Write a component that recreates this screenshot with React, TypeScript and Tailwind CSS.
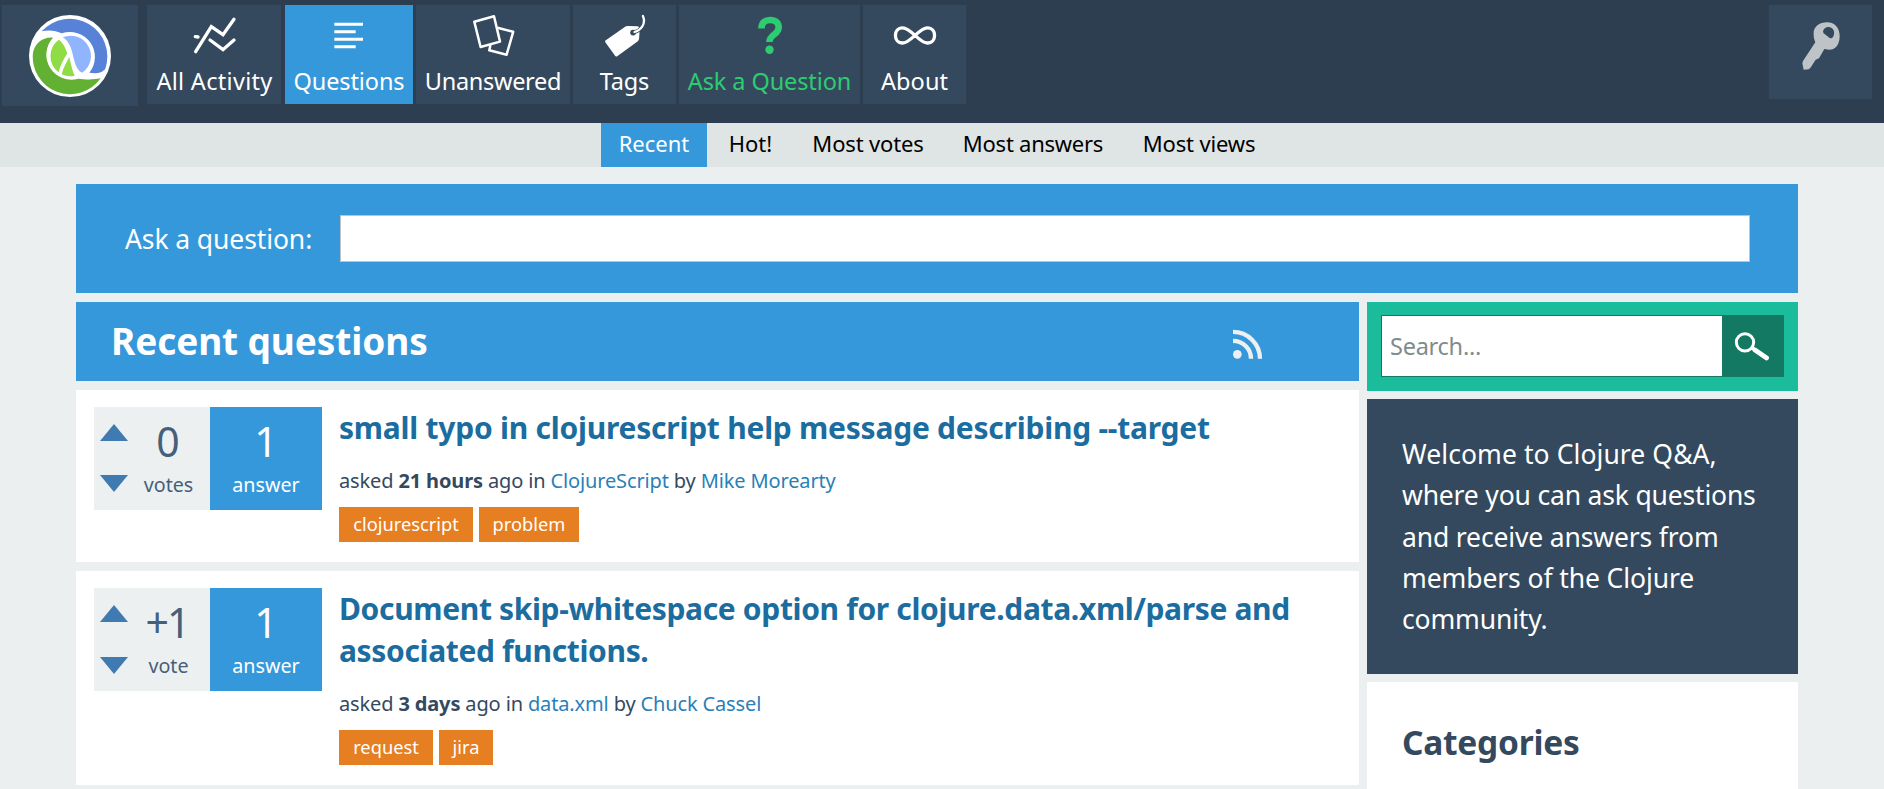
import type { ReactNode } from "react";

/* ---------- icons ---------- */

function Logo() {
  return (
    <svg className="size-[82px]" viewBox="27 21 246 246">
      <circle cx="150" cy="144" r="123" fill="#fff" />
      <path
        d="M65 70 A113 113 0 0 1 256 182 C246 196 226 197 208 194 A75 75 0 0 0 125 76 C108 67 85 65 65 70Z"
        fill="#5881d8"
      />
      <path
        d="M99 89 C68 86 45 106 39 134 A112 112 0 0 0 242 211 C218 216 192 214 175 212 A75 75 0 0 1 99 89Z"
        fill="#63b132"
      />
      <path d="M116 95 C130 105 137 120 142 136 C130 155 120 174 116 193 A61 61 0 0 1 116 95Z" fill="#90dc47" />
      <path d="M148 147 C154 175 158 190 164 203 A61 61 0 0 1 125 199 C129 180 139 165 148 147Z" fill="#90dc47" />
      <path
        d="M128 88 A61 61 0 0 1 187 194 C169 188 163 160 157 134 C152 114 144 98 128 88Z"
        fill="#91b4ff"
      />
    </svg>
  );
}

const ActivityIcon = () => (
  <svg className="size-12" viewBox="570 36 144 144" fill="none" stroke="#fff" strokeWidth="10" strokeLinecap="round">
    <path d="M587 155 L634 80 L669 104 L702 58" />
    <path d="M630 120 L669 149 L702 120" />
    <path d="M586 110 L594 111" />
  </svg>
);

const QuestionsIcon = () => (
  <svg className="size-12" viewBox="975 36 144 144" fill="none" stroke="#fff" strokeWidth="9">
    <path d="M1003 73 H1089 M1003 95 H1067 M1003 118 H1089 M1003 140 H1067" />
  </svg>
);

const CardsIcon = () => (
  <svg className="size-12" viewBox="469 12 48 48" fill="none" stroke="#fff" strokeWidth="2.5" strokeLinejoin="round">
    <path d="M474.3 21.7 L494 16.3 L500 41.6 L480.6 47 Z" />
    <path d="M497.5 27.8 L513.2 31.8 L506.6 54.7 L489.3 50.3 L490.4 45" />
  </svg>
);

const TagIcon = () => (
  <svg className="size-12" viewBox="600.5 12 48 48" fill="none">
    <path
      d="M604.6 40.8 L625 26.4 Q626 25.9 627 26 L637 26.3 Q639.3 26.6 639.2 29 L638.6 38.5 Q638.4 40.4 637 41.6 L617 56 Q615.4 57.2 614.4 55.6 L604.8 42.2 Z"
      fill="#fff"
    />
    <circle cx="632.6" cy="32.6" r="2.9" fill="#34495e" />
    <path d="M634 32 C640 30.5 646 24 642.4 16" stroke="#34495e" strokeWidth="3.6" />
    <path d="M634 32 C640 30.5 646 24 642.4 16" stroke="#fff" strokeWidth="2.3" strokeLinecap="round" />
  </svg>
);

const HelpIcon = () => (
  <svg className="size-12" viewBox="745.5 12 48 48" fill="none">
    <path
      d="M761 28.4 C761 22.6 764.6 20 769.6 20 C775 20 778.2 23 778.2 27.4 C778.2 34.5 768.9 34.5 768.9 42"
      stroke="#2ecc71"
      strokeWidth="6.6"
    />
    <circle cx="769" cy="49.8" r="4.2" fill="#2ecc71" />
  </svg>
);

const InfinityIcon = () => (
  <svg className="size-12" viewBox="890.8 12 48 48" fill="none" stroke="#fff" strokeWidth="3.3">
    <path d="M914.8 35.4 C909 30 906 27.8 902.5 27.8 C892.8 27.8 892.8 43 902.5 43 C906 43 909 40.8 914.8 35.4 C920.6 30 923.6 27.8 927.1 27.8 C936.8 27.8 936.8 43 927.1 43 C923.6 43 920.6 40.8 914.8 35.4Z" />
  </svg>
);

const KeyIcon = () => (
  <svg className="h-[48px] w-[38px]" viewBox="1322 64 114 144">
    <path
      fillRule="evenodd"
      fill="#bdc3c7"
      d="M1357 102 C1355 80 1372 65 1397 65 C1422 65 1436 85 1435 108 C1434 133 1422 147 1403 147 L1389 145 L1373 173 L1363 177 L1347 202 L1342 206 L1327 207 L1323 188 L1325 181 L1362 125 C1359 118 1357 110 1357 102Z M1385 93 C1386 83 1395 78 1403 79 C1415 81 1420 90 1418 100 C1416 112 1410 116 1404 111 L1387 98Z"
    />
  </svg>
);

const RssIcon = () => (
  <svg className="size-8" viewBox="50 40 96 96" fill="none" stroke="#ecf0f1" strokeWidth="13">
    <circle cx="66" cy="119" r="13" fill="#ecf0f1" stroke="none" />
    <path d="M53 78.5 A54 54 0 0 1 107 132 M53 51.5 A81 81 0 0 1 134 132" />
  </svg>
);

const SearchIcon = () => (
  <svg className="h-[30px] w-[36px]" viewBox="1119 992 108 90" fill="none" stroke="#fff">
    <circle cx="1152" cy="1026" r="26" strokeWidth="9" />
    <path d="M1173 1043 L1181 1048" strokeWidth="11" />
    <path d="M1182 1049 L1217 1073" strokeWidth="14" strokeLinecap="round" />
  </svg>
);

/* ---------- header ---------- */

type NavEntry = { label: string; icon: ReactNode; box: string; text: string };

const nav: NavEntry[] = [
  { label: "All Activity", icon: <ActivityIcon />, box: "w-[134px] bg-[#34495e] mr-1", text: "pl-px text-white tracking-[0.3px]" },
  { label: "Questions", icon: <QuestionsIcon />, box: "w-[128px] bg-[#3498db] mr-[3px]", text: "text-white tracking-[-0.1px]" },
  { label: "Unanswered", icon: <CardsIcon />, box: "w-[154px] bg-[#34495e] mr-[3px]", text: "text-white tracking-[-0.3px]" },
  { label: "Tags", icon: <TagIcon />, box: "w-[103px] bg-[#34495e] mr-[3px]", text: "text-white tracking-[-0.2px]" },
  { label: "Ask a Question", icon: <HelpIcon />, box: "w-[181px] bg-[#34495e] mr-[3px]", text: "text-[#2ecc71] tracking-[-0.1px]" },
  { label: "About", icon: <InfinityIcon />, box: "w-[103px] bg-[#34495e]", text: "text-white tracking-[0.1px]" },
];

function Header() {
  return (
    <header className="flex h-[123px] items-start bg-[#2c3e50] pt-[5px] pr-3 pl-0.5">
      <a className="mr-[9px] flex h-[101px] w-[136px] items-start justify-center bg-[#34495e] pt-[10px]">
        <Logo />
      </a>
      <nav className="flex">
        {nav.map((n) => (
          <a key={n.label} className={`flex h-[99px] flex-col items-center pt-[7px] ${n.box}`}>
            {n.icon}
            <span className={`mt-[5px] text-[23.5px] leading-8 whitespace-nowrap ${n.text}`}>{n.label}</span>
          </a>
        ))}
      </nav>
      <button className="ml-auto flex h-[94px] w-[103px] justify-center bg-[#34495e] pt-[17px]">
        <KeyIcon />
      </button>
    </header>
  );
}

const tabs = [
  { label: "Recent", cls: "w-[106px] bg-[#3498db] text-white" },
  { label: "Hot!", cls: "w-[79px]" },
  { label: "Most votes", cls: "w-[148px] tracking-[-0.15px]" },
  { label: "Most answers", cls: "w-[174px] tracking-[-0.25px]" },
  { label: "Most views", cls: "w-[150px] tracking-[-0.15px]" },
];

function SubNav() {
  return (
    <div className="flex h-11 gap-1 bg-[#dfe4e4] pl-[601px] text-[22px] leading-[40px] text-black">
      {tabs.map((t) => (
        <a key={t.label} className={`text-center whitespace-nowrap ${t.cls}`}>
          {t.label}
        </a>
      ))}
    </div>
  );
}

/* ---------- questions ---------- */

type Question = {
  votes: string;
  votesCls: string;
  unit: string;
  title: string[];
  titleTracking: string;
  when: string;
  category: string;
  author: string;
  tags: { label: string; w: string }[];
  height: string;
  arrowGap: string;
};

const questions: Question[] = [
  {
    votes: "0",
    votesCls: "pr-[5px]",
    unit: "votes",
    title: ["small typo in clojurescript help message describing --target"],
    titleTracking: "tracking-[-0.24px]",
    when: "21 hours",
    category: "ClojureScript",
    author: "Mike Morearty",
    tags: [
      { label: "clojurescript", w: "w-[134px]" },
      { label: "problem", w: "w-[100px]" },
    ],
    height: "h-[172px]",
    arrowGap: "mt-[34px]",
  },
  {
    votes: "+1",
    votesCls: "pr-[7px] tracking-[-2px]",
    unit: "vote",
    title: ["Document skip-whitespace option for clojure.data.xml/parse and", "associated functions."],
    titleTracking: "tracking-[-0.35px]",
    when: "3 days",
    category: "data.xml",
    author: "Chuck Cassel",
    tags: [
      { label: "request", w: "w-[94px]" },
      { label: "jira", w: "w-[54px]" },
    ],
    height: "h-[214px]",
    arrowGap: "mt-[35px]",
  },
];

function QuestionCard({ q }: { q: Question }) {
  return (
    <article className={`flex bg-white pt-[17px] pl-[18px] ${q.height}`}>
      <div className="flex h-[103px] w-[116px] shrink-0 bg-[#ecf0f1] text-[#465f7b]">
        <div className="flex w-[37px] flex-col items-start pt-[17px] pl-1.5">
          <svg className="h-[17px] w-[28px]" viewBox="0 0 28 17">
            <path d="M14 0 L28 17 H0Z" fill="#3f7ab0" />
          </svg>
          <svg className={`h-[17px] w-[28px] ${q.arrowGap}`} viewBox="0 0 28 17">
            <path d="M0 0 H28 L14 17Z" fill="#3f7ab0" />
          </svg>
        </div>
        <div className="w-[79px] text-center">
          <div className={`mt-[10px] h-[49px] text-[41px] leading-[49px] ${q.votesCls}`}>{q.votes}</div>
          <div className="mt-[6px] pr-1 text-[19.7px] leading-[26px]">{q.unit}</div>
        </div>
      </div>
      <div className="h-[103px] w-[112px] shrink-0 bg-[#3498db] text-center text-white">
        <div className="mt-[10px] h-[49px] text-[41px] leading-[49px]">1</div>
        <div className="mt-[6px] text-[19.7px] leading-[26px]">answer</div>
      </div>
      <div className="ml-[17px]">
        <h3 className={`text-[30px] leading-[42px] font-bold whitespace-nowrap text-[#1b6c9f] ${q.titleTracking}`}>
          {q.title.map((line) => (
            <span key={line} className="block">
              {line}
            </span>
          ))}
        </h3>
        <p className="mt-[17px] text-[20px] leading-[30px] tracking-[-0.14px] whitespace-nowrap text-[#34495e]">
          asked <b>{q.when}</b> ago in <a className="text-[#2980b9]">{q.category}</a> by{" "}
          <a className="text-[#2980b9]">{q.author}</a>
        </p>
        <div className="mt-[11px] flex gap-1.5 text-[18.3px] leading-[34px] text-white">
          {q.tags.map((t) => (
            <a key={t.label} className={`h-[35px] bg-[#e67e22] text-center ${t.w}`}>
              {t.label}
            </a>
          ))}
        </div>
      </div>
    </article>
  );
}

/* ---------- page ---------- */

const welcome = [
  { text: "Welcome to Clojure Q&A,", cls: "tracking-[0.08px]" },
  { text: "where you can ask questions", cls: "tracking-[-0.18px]" },
  { text: "and receive answers from", cls: "tracking-[-0.15px]" },
  { text: "members of the Clojure", cls: "tracking-[-0.1px]" },
  { text: "community.", cls: "tracking-[-0.15px]" },
];

export default function App() {
  return (
    <div className="h-[789px] w-[1884px] overflow-hidden bg-[#ebeff0] font-['Noto_Sans',sans-serif]">
      <Header />
      <SubNav />
      <main className="mt-[17px] ml-[76px] w-[1722px]">
        <section className="flex h-[109px] items-center bg-[#3498db] pr-12 pl-[49px]">
          <label className="w-[215px] text-[26.5px] leading-9 tracking-[-0.1px] whitespace-nowrap text-white">
            Ask a question:
          </label>
          <input className="h-[47px] flex-1 border border-[#bdc3c7] bg-white" />
        </section>
        <div className="mt-[9px] flex gap-2">
          <div className="flex w-[1283px] flex-col gap-[9px]">
            <div className="flex h-[79px] items-start justify-between bg-[#3498db] pr-[95px] pl-[35px]">
              <h1 className="mt-[14px] text-[37px] leading-[50px] font-bold tracking-[-0.1px] text-white">
                Recent questions
              </h1>
              <div className="mt-[26px]">
                <RssIcon />
              </div>
            </div>
            {questions.map((q) => (
              <QuestionCard key={q.unit} q={q} />
            ))}
            <div className="h-[60px] bg-white" />
          </div>
          <aside className="flex w-[431px] flex-col gap-2">
            <div className="flex h-[89px] bg-[#1abc9c] px-[14px] pt-[13px]">
              <input
                placeholder="Search..."
                className="h-[62px] w-[341px] border border-r-0 border-[#147963] bg-white pl-2 text-[23.5px] tracking-[-0.25px] placeholder:text-[#7f8c8d]"
              />
              <button className="flex h-[62px] w-[62px] items-start bg-[#147963] pt-[16px] pl-[12px]">
                <SearchIcon />
              </button>
            </div>
            <div className="h-[275px] bg-[#34495e] pt-[35px] pl-[35px] text-[26.5px] leading-[41.3px] whitespace-nowrap text-white">
              {welcome.map((l) => (
                <p key={l.text} className={l.cls}>
                  {l.text}
                </p>
              ))}
            </div>
            <div className="h-[160px] bg-white pt-[37px] pl-[35px]">
              <h2 className="text-[33.5px] leading-[46px] font-bold tracking-[-0.25px] text-[#34495e]">Categories</h2>
            </div>
          </aside>
        </div>
      </main>
    </div>
  );
}
